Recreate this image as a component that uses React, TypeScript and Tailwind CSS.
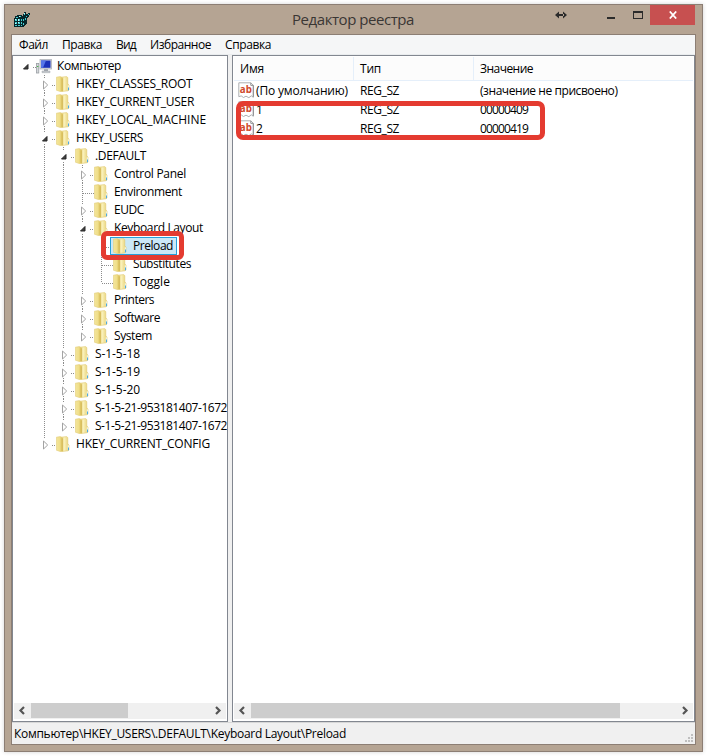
import { useLayoutEffect, useRef, useState } from 'react';

/** Single-line label whose letter spacing is adjusted so that it fills the given width. */
function Label({ children, w, className = '' }: { children: string; w: number; className?: string }) {
  const ref = useRef<HTMLSpanElement>(null);
  const [spacing, setSpacing] = useState(0);
  useLayoutEffect(() => {
    const natural = ref.current!.getBoundingClientRect().width;
    setSpacing((w - natural) / children.length);
  }, [children, w]);
  return (
    <span ref={ref} className={`shrink-0 whitespace-pre ${className}`} style={{ letterSpacing: spacing }}>
      {children}
    </span>
  );
}

function Folder() {
  return (
    <svg width="14" height="16" viewBox="0 0 14 16" className="shrink-0">
      <defs>
        <linearGradient id="fl" x1="0" x2="1">
          <stop offset="0" stopColor="#f3e59a" />
          <stop offset="0.5" stopColor="#f0df8c" />
          <stop offset="1" stopColor="#dcc25a" />
        </linearGradient>
        <linearGradient id="fr" x1="0" x2="1">
          <stop offset="0" stopColor="#e3cb68" />
          <stop offset="0.4" stopColor="#faf2bd" />
          <stop offset="1" stopColor="#e6cf70" />
        </linearGradient>
      </defs>
      <path d="M5 1.2 10.6.6 11.8 1.6V8l1.2 1v5l-1 .8-6 .7z" fill="url(#fr)" stroke="#e0ca74" strokeWidth=".6" />
      <path d="M.4 1.2 4.4.6 6.6 2.2V15L5 15.8.4 14.2z" fill="url(#fl)" stroke="#e2cd78" strokeWidth=".6" />
      <path d="M6.2 2.4V15" stroke="#cfb24c" strokeWidth=".8" />
      <path d="M11.7 9.2h1.3v4.6h-1.3z" fill="#f2f3dc" />
      <path d="M12 11.6h1v2.6h-1z" fill="#49a9e6" />
    </svg>
  );
}

function Computer() {
  return (
    <svg width="16" height="15" viewBox="0 0 16 15" className="shrink-0">
      <rect x="0.5" y="4.5" width="2.3" height="9.5" fill="#d5d8db" stroke="#9a9fa4" strokeWidth=".8" />
      <path d="M1 7.5h1.4" stroke="#48b848" />
      <rect x="4" y="0.5" width="11.5" height="9.5" fill="#d5d7dc" stroke="#b0b3ba" strokeWidth=".8" />
      <rect x="5" y="1.5" width="9.5" height="7.3" fill="#1b32b8" />
      <path d="M5 1.5h5L7 8.8H5z" fill="#5676e8" />
      <path d="M8 10.2h4v2H8z" fill="#9da2a9" />
      <path d="M6 12h8v1.7H6z" fill="#c4c7cc" stroke="#a4a9b0" strokeWidth=".5" />
    </svg>
  );
}

function StringValue() {
  return (
    <svg width="17" height="17" viewBox="0 0 17 17" className="shrink-0">
      <path d="M.8.8h12L15.3 3.3v12l-2-1.5-2.4 1.9L8 14.2l-2.5 1.3-2.3-1.6-2.4.8z" fill="#fff" stroke="#adafb2" strokeWidth="1" />
      <path d="M12.8.8v2.6h2.5v11.4" fill="none" stroke="#85878a" strokeWidth=".9" />
      <text x="1.8" y="10.9" fontFamily="Open Sans" fontWeight="700" fontSize="11" textLength="12" lengthAdjust="spacingAndGlyphs" fill="#d0492b">
        ab
      </text>
    </svg>
  );
}

function RegeditLogo() {
  return (
    <svg width="17" height="16" viewBox="0 0 17 16" shapeRendering="crispEdges">
      <path d="M0 6h1V4h2V3h5v1h1V2h1V0h2v2h2V1h2v2h-1v2h-1v1h-1v6h-1v1h-1v1h-1v1H0z" fill="#06262a" />
      <path
        d="M1 7h2v2H1zM4 7h2v2H4zM7 7h1v2H7zM1 10h2v2H1zM4 10h2v2H4zM7 10h1v2H7zM1 13h2v1H1zM4 13h2v1H4zM7 13h1v1H7zM2 5h2v1H2zM5 4h2v1H5zM9 7h1v2H9zM10 1h1v2h-1zM14 2h1v1h-1zM12 4h1v1h-1zM9 11h1v2H9zM11 6h1v2h-1z"
        fill="#45cdd3"
      />
      <path d="M1 7h1v1H1zM4 7h1v2H4zM5 4h1v1H5zM10 1h1v1h-1zM4 10h1v1H4zM1 11h1v1H1z" fill="#c4fbfb" />
    </svg>
  );
}

const DOTS_V = 'bg-[repeating-linear-gradient(to_bottom,#8c8c8c_0_1px,transparent_1px_2px)]';
const DOTS_H = 'bg-[repeating-linear-gradient(to_right,#8c8c8c_0_1px,transparent_1px_2px)]';

/** Vertical dotted connector of one ancestor level. */
function Guide({ on }: { on: boolean }) {
  return <span className="flex w-[19px] shrink-0 self-stretch pl-[7px]">{on && <i className={`w-px ${DOTS_V}`} />}</span>;
}

type Mark = 'open' | 'closed' | 'none';

function Expander({ mark, last, first }: { mark: Mark; last: boolean; first?: boolean }) {
  if (mark === 'none') {
    return (
      <span className="flex w-[19px] shrink-0 self-stretch pl-[7px]">
        <i className={`w-px ${DOTS_V} ${last ? 'h-[10px]' : 'h-[18px]'}`} />
        <i className={`mt-[10px] h-px w-[11px] ${DOTS_H}`} />
      </span>
    );
  }
  return (
    <span className="flex w-[19px] shrink-0 self-stretch">
      <span className="flex w-[15px] flex-col items-center">
        <i className={`h-[3px] w-px ${first ? '' : DOTS_V}`} />
        <svg width="11" height="12" viewBox="0 0 11 12">
          {mark === 'open' ? (
            <path d="M8 4.5V9H3.5z" fill="#404040" stroke="#262626" strokeWidth="1" strokeLinejoin="round" />
          ) : (
            <path d="M4.5 3v8L8.7 7z" fill="#fff" stroke="#a3a3a3" strokeWidth="1" />
          )}
        </svg>
        <i className={`h-[3px] w-px ${last ? '' : DOTS_V}`} />
      </span>
      <i className={`mt-[10px] h-px w-[4px] ${DOTS_H}`} />
    </span>
  );
}

type Node = { text: string; w: number; guides: boolean[]; mark: Mark; last?: boolean; selected?: boolean };

const O = true;
const NODES: Node[] = [
  { text: 'HKEY_CLASSES_ROOT', w: 116.5, guides: [], mark: 'closed' },
  { text: 'HKEY_CURRENT_USER', w: 118, guides: [], mark: 'closed' },
  { text: 'HKEY_LOCAL_MACHINE', w: 130, guides: [], mark: 'closed' },
  { text: 'HKEY_USERS', w: 67, guides: [], mark: 'open' },
  { text: '.DEFAULT', w: 51, guides: [O], mark: 'open' },
  { text: 'Control Panel', w: 72, guides: [O, O], mark: 'closed' },
  { text: 'Environment', w: 68, guides: [O, O], mark: 'none' },
  { text: 'EUDC', w: 30, guides: [O, O], mark: 'closed' },
  { text: 'Keyboard Layout', w: 89, guides: [O, O], mark: 'open' },
  { text: 'Preload', w: 40, guides: [O, O, O], mark: 'none', selected: true },
  { text: 'Substitutes', w: 58, guides: [O, O, O], mark: 'none' },
  { text: 'Toggle', w: 37, guides: [O, O, O], mark: 'none', last: true },
  { text: 'Printers', w: 40, guides: [O, O], mark: 'closed' },
  { text: 'Software', w: 46, guides: [O, O], mark: 'closed' },
  { text: 'System', w: 38, guides: [O, O], mark: 'closed', last: true },
  { text: 'S-1-5-18', w: 45, guides: [O], mark: 'closed' },
  { text: 'S-1-5-19', w: 45, guides: [O], mark: 'closed' },
  { text: 'S-1-5-20', w: 45, guides: [O], mark: 'closed' },
  { text: 'S-1-5-21-953181407-1672', w: 132, guides: [O], mark: 'closed' },
  { text: 'S-1-5-21-953181407-1672', w: 132, guides: [O], mark: 'closed', last: true },
  { text: 'HKEY_CURRENT_CONFIG', w: 134, guides: [], mark: 'closed', last: true },
];

function TreeRow({ node }: { node: Node }) {
  return (
    <div className="flex h-[18px] items-center pl-6">
      {node.guides.map((on, i) => (
        <Guide key={i} on={on} />
      ))}
      <Expander mark={node.mark} last={!!node.last} />
      {node.selected ? (
        <span className="-ml-[3px] flex h-[18px] w-[67px] items-center border border-[#26a0da] bg-[#cbe8f6] pl-[2px]">
          <Folder />
          <Label w={node.w} className="ml-[6px]">{node.text}</Label>
        </span>
      ) : (
        <>
          <Folder />
          <Label w={node.w} className="ml-[6px]">{node.text}</Label>
        </>
      )}
    </div>
  );
}

function Arrow({ flip }: { flip?: boolean }) {
  return (
    <svg width="17" height="15" viewBox="0 0 17 15" className={`shrink-0 ${flip ? '-scale-x-100' : ''}`}>
      <path d="M10 4 6.5 7.5 10 11" fill="none" stroke="#555" strokeWidth="2.2" />
    </svg>
  );
}

function ScrollBar({ thumb }: { thumb: string }) {
  return (
    <div className="mx-px mb-[2px] flex h-4 bg-[#f0f0f0]">
      <Arrow />
      <div className={`h-[15px] bg-[#cdcdcd] ${thumb}`} />
      <div className="grow" />
      <Arrow flip />
    </div>
  );
}

const VALUES = [
  { name: '(По умолчанию)', nw: 92, value: '(значение не присвоено)', vw: 137.5 },
  { name: '1', nw: 6, value: '00000409', vw: 48 },
  { name: '2', nw: 6, value: '00000419', vw: 48 },
];

const MENU = [
  { text: 'Файл', w: 29 },
  { text: 'Правка', w: 40 },
  { text: 'Вид', w: 20 },
  { text: 'Избранное', w: 61 },
  { text: 'Справка', w: 46 },
];

export default function App() {
  return (
    <div className="relative h-[756px] w-[708px] overflow-hidden bg-white pt-1 pl-1 font-['Open_Sans','Noto_Sans',sans-serif] text-[12px] leading-[18px] text-black">
      <div className="flex h-[748px] w-[699px] flex-col border border-[#8c7e74] bg-[#b5a493] px-[6px] pb-[6px] shadow-[0_0_4px_rgba(0,0,0,0.18)]">
        <div className="flex h-[29px] shrink-0">
          <div className="w-[281px] pt-[7px] pl-[3px]">
            <RegeditLogo />
          </div>
          <Label w={122} className="pt-[3px] text-[15px] leading-[22px] text-[#3a3633]">Редактор реестра</Label>
          <svg width="12" height="8" viewBox="0 0 12 8" className="mt-[6px] ml-[141px]">
            <path d="M0 4 4 .5v7zM12 4 8 .5v7zM3 3h6v2H3z" fill="#2b2b2b" />
          </svg>
          <svg width="8" height="2" viewBox="0 0 8 2" className="mt-[12px] ml-[40px]">
            <path d="M0 0h8v2H0z" fill="#2b2b2b" />
          </svg>
          <div className="mt-[6px] ml-[18px] h-2 w-[10px] border border-t-2 border-[#2b2b2b]" />
          <div className="ml-[7px] flex h-5 w-[45px] items-center justify-center bg-[#c75050]">
            <svg width="8" height="8" viewBox="0 0 8 8">
              <path d="m.8.5 6.4 7M7.2.5.8 7.5" stroke="#fff" strokeWidth="1.8" />
            </svg>
          </div>
        </div>

        <div className="flex min-h-0 grow flex-col border border-[#8c7e74] bg-[#f0f0f0]">
          <div className="flex h-5 shrink-0 items-center gap-[14px] border-b border-[#e9ecee] bg-[#f5f6f7] pl-[7px]">
            {MENU.map((m) => (
              <Label key={m.text} w={m.w}>{m.text}</Label>
            ))}
          </div>

          <div className="flex h-[667px] shrink-0 justify-between">
            <div className="flex w-[216px] flex-col border border-[#828790] bg-white">
              <div className="min-h-0 grow overflow-hidden pt-[1px]">
                <div className="flex h-[18px] items-center pl-[5px]">
                  <Expander mark="open" last first />
                  <span className="-ml-[1px] flex">
                    <Computer />
                  </span>
                  <Label w={64} className="ml-[5px]">Компьютер</Label>
                </div>
                {NODES.map((n, i) => (
                  <TreeRow key={i} node={n} />
                ))}
              </div>
              <ScrollBar thumb="w-[97px]" />
            </div>

            <div className="flex w-[463px] flex-col border border-[#828790] bg-white">
              <div className="mx-px mt-px flex h-6 shrink-0 items-center border-b border-[#e5effa] bg-[#fcfcfc]">
                <div className="flex h-full w-[120px] items-center border-r border-[#e5effa] pl-[6px]">
                  <Label w={24}>Имя</Label>
                </div>
                <div className="flex h-full w-[120px] items-center border-r border-[#e5effa] pl-[6px]">
                  <Label w={21}>Тип</Label>
                </div>
                <Label w={53} className="ml-[6px]">Значение</Label>
              </div>
              <div className="grow">
                {VALUES.map((v) => (
                  <div key={v.name} className="flex h-[19px] items-center pl-[5px]">
                    <div className="flex w-[122px] items-center gap-px">
                      <StringValue />
                      <Label w={v.nw}>{v.name}</Label>
                    </div>
                    <div className="flex w-[120px]">
                      <Label w={39}>REG_SZ</Label>
                    </div>
                    <Label w={v.vw}>{v.value}</Label>
                  </div>
                ))}
              </div>
              <ScrollBar thumb="w-[369px]" />
            </div>
          </div>

          <div className="flex grow items-center justify-between border-t border-[#d7d7d7] pr-[2px] pl-[2px]">
            <Label w={332}>{'Компьютер\\HKEY_USERS\\.DEFAULT\\Keyboard Layout\\Preload'}</Label>
            <svg width="8" height="8" viewBox="0 0 8 8" className="mb-[2px] self-end">
              <path d="M6 0h2v2H6zM3 3h2v2H3zM6 3h2v2H6zM0 6h2v2H0zM3 6h2v2H3zM6 6h2v2H6z" fill="#bfbfbf" />
            </svg>
          </div>
        </div>
      </div>

      {/* Highlight frames drawn over the window */}
      <div className="absolute top-[231px] left-[101px] h-[29px] w-[83px] rounded-[6px] border-[5px] border-[#e43b30]" />
      <div className="absolute top-[101px] left-[236px] h-[39px] w-[309px] rounded-[7px] border-[5px] border-[#e43b30]" />
    </div>
  );
}
